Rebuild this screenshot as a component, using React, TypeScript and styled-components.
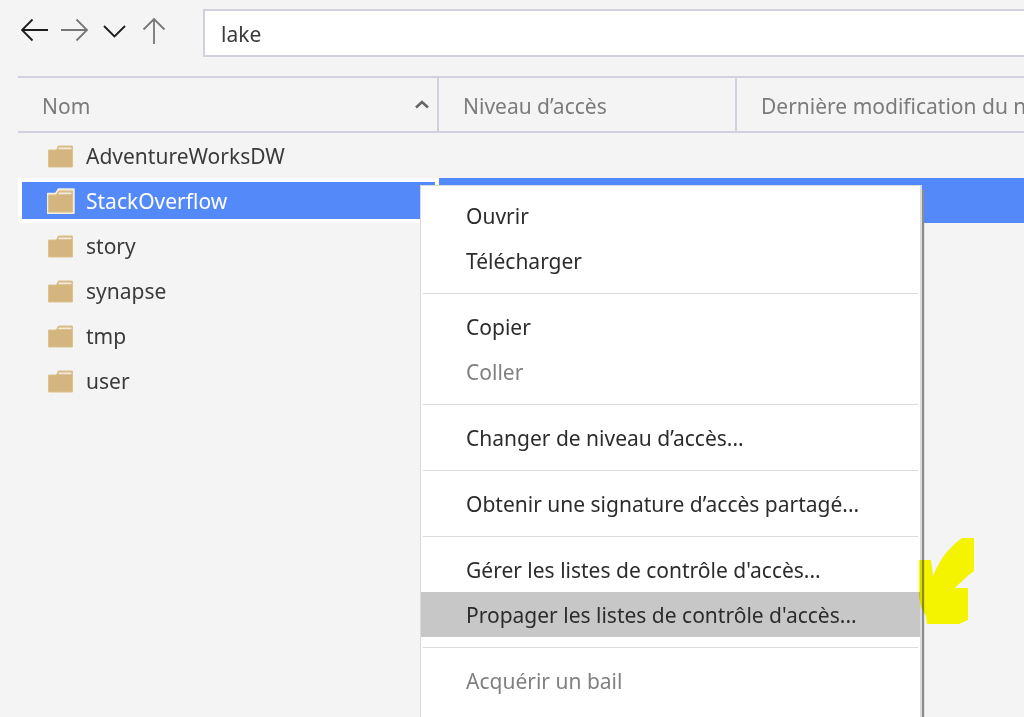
import React from "react";
import styled, { createGlobalStyle } from "styled-components";

const GlobalStyle = createGlobalStyle`
  *, *::before, *::after { box-sizing: border-box; }
  body {
    margin: 0;
    background: #f4f4f4;
    color: #3a3a3a;
    font: 21px/30px "Noto Sans", "Open Sans", sans-serif;
  }
  button, input { font: inherit; color: inherit; }
`;

const Page = styled.main`
  position: relative;
  min-height: 100vh;
  max-height: 100vh;
  overflow: hidden;
  padding: 9px 0 0 18px;
`;

const Toolbar = styled.div`
  display: flex;
  align-items: flex-start;
  margin-bottom: 19px;
`;

const NavButtons = styled.div`
  display: flex;
  flex: none;
  width: 185px;
  padding-top: 6px;
`;

const NavButton = styled.button`
  display: flex;
  align-items: center;
  justify-content: center;
  width: 40px;
  height: 32px;
  margin: 0;
  padding: 0;
  border: 0;
  background: none;
  color: ${(p) => (p.disabled ? "#777" : "#1c1c1c")};
  &:first-child { width: 36px; }
`;

const PathInput = styled.input`
  flex: 1;
  min-width: 0;
  height: 48px;
  padding: 2px 16px 0;
  border: 2px solid #d0d0de;
  border-right: 0;
  border-radius: 0;
  background: #fff;
  outline: none;
`;

const FileTable = styled.table`
  width: 100%;
  table-layout: fixed;
  border-collapse: separate;
  border-spacing: 0;
`;

const HeadCell = styled.th<{ $width?: number }>`
  width: ${(p) => (p.$width ? `${p.$width}px` : "auto")};
  height: 57px;
  padding: 2px 0 0 24px;
  border: solid #d0d0de;
  border-width: 2px ${(p) => (p.$width ? "2px" : "0")} 2px 0;
  color: #7b7b7b;
  font-weight: 400;
  text-align: left;
  white-space: nowrap;
  overflow: hidden;
`;

const SortLabel = styled.span`
  display: flex;
  align-items: center;
  justify-content: space-between;
  margin-right: 6px;
`;

const Row = styled.tr<{ $selected?: boolean }>`
  background: ${(p) => (p.$selected ? "#5389f8" : "transparent")};
  color: ${(p) => (p.$selected ? "#fff" : "inherit")};
`;

const Cell = styled.td<{ $selected?: boolean }>`
  height: 45px;
  padding: 0 0 0 29px;
  box-shadow: ${(p) => (p.$selected ? "inset 0 0 0 4px #fff" : "none")};
`;

const FileName = styled.span`
  display: flex;
  align-items: center;
  gap: 10px;
`;

const Menu = styled.div`
  position: absolute;
  top: 185px;
  left: 420px;
  width: 502px;
  padding: 7px 0 40px;
  border: 1px solid #d9d9e0;
  border-right-width: 2px;
  background: #fff;
  box-shadow: 2px 5px 1px #8c8c8c;
`;

const MenuItem = styled.button<{ $active?: boolean }>`
  display: block;
  width: 100%;
  height: 45px;
  margin: 0;
  padding: 1px 0 0 45px;
  border: 0;
  background: ${(p) => (p.$active ? "#c7c7c7" : "transparent")};
  color: ${(p) => (p.disabled ? "#808080" : "#2c2c2c")};
  text-align: left;
  white-space: nowrap;
`;

const Separator = styled.hr`
  height: 1px;
  margin: 10px 2px;
  border: 0;
  background: #dcdcdf;
`;

const Highlighter = styled.svg`
  position: absolute;
  top: 538px;
  left: 919px;
  mix-blend-mode: multiply;
`;

type NavKind = "back" | "forward" | "recent" | "up";

const navPaths: Record<NavKind, string> = {
  back: "M27 14H1M11.500 3.500L1 14l10.500 10.500",
  forward: "M2 14h26M17.500 3.500L28 14 17.500 24.500",
  recent: "M5 10l10.500 10.500L26 10",
  up: "M15 28V3M4.500 13.500L15 3l10.500 10.500",
};

const NavIcon = ({ kind }: { kind: NavKind }) => (
  <svg width="30" height="30" viewBox="0 0 30 30" fill="none" stroke="currentColor" strokeWidth="1.8" aria-hidden="true">
    <path d={navPaths[kind]} />
  </svg>
);

const FolderIcon = ({ selected }: { selected?: boolean }) => (
  <svg width="29" height="26" viewBox="0 0 29 26" aria-hidden="true">
    {selected && (
      <path d="M0.500 5.500h8L11.500 1H27v24.200H0.500z" fill="#f5e9cf" stroke="#f5eddc" strokeWidth="1.500" strokeLinejoin="round" />
    )}
    <path d="M1.500 7h7.800L11.500 3h14v21h-24z" fill="#d4b57e" stroke="#dcc290" strokeWidth="1" />
    <path d="M11 6.200l1-1.700h12.500v1.700z" fill="#f2ebdc" />
  </svg>
);

const folders = ["AdventureWorksDW", "StackOverflow", "story", "synapse", "tmp", "user"];
const selectedFolder = "StackOverflow";

type Entry = { label: string; disabled?: boolean; active?: boolean };

const menuGroups: Entry[][] = [
  [{ label: "Ouvrir" }, { label: "Télécharger" }],
  [{ label: "Copier" }, { label: "Coller", disabled: true }],
  [{ label: "Changer de niveau d’accès..." }],
  [{ label: "Obtenir une signature d’accès partagé..." }],
  [
    { label: "Gérer les listes de contrôle d'accès..." },
    { label: "Propager les listes de contrôle d'accès...", active: true },
  ],
  [{ label: "Acquérir un bail", disabled: true }],
];

export default function App() {
  return (
    <>
      <GlobalStyle />
      <Page>
        <Toolbar>
          <NavButtons>
            <NavButton aria-label="Précédent"><NavIcon kind="back" /></NavButton>
            <NavButton aria-label="Suivant" disabled><NavIcon kind="forward" /></NavButton>
            <NavButton aria-label="Historique"><NavIcon kind="recent" /></NavButton>
            <NavButton aria-label="Dossier parent" disabled><NavIcon kind="up" /></NavButton>
          </NavButtons>
          <PathInput aria-label="Chemin" defaultValue="lake" />
        </Toolbar>

        <FileTable>
          <thead>
            <tr>
              <HeadCell $width={421} aria-sort="ascending">
                <SortLabel>
                  Nom
                  <svg width="18" height="16" viewBox="0 0 18 16" fill="none" stroke="#666" strokeWidth="2.600" aria-hidden="true">
                    <path d="M3 9.500L9 4l6 5.500" />
                  </svg>
                </SortLabel>
              </HeadCell>
              <HeadCell $width={298}>Niveau d’accès</HeadCell>
              <HeadCell>Dernière modification du niveau d’accès</HeadCell>
            </tr>
          </thead>
          <tbody>
            {folders.map((name) => {
              const selected = name === selectedFolder;
              return (
                <Row key={name} $selected={selected}>
                  <Cell $selected={selected}>
                    <FileName><FolderIcon selected={selected} />{name}</FileName>
                  </Cell>
                  <td />
                  <td />
                </Row>
              );
            })}
          </tbody>
        </FileTable>

        <Menu role="menu">
          {menuGroups.map((group, index) => (
            <React.Fragment key={group[0].label}>
              {index > 0 && <Separator />}
              {group.map((item) => (
                <MenuItem key={item.label} role="menuitem" disabled={item.disabled} $active={item.active}>
                  {item.label}
                </MenuItem>
              ))}
            </React.Fragment>
          ))}
        </Menu>

        <Highlighter width="56" height="86" viewBox="0 0 56 86" aria-hidden="true">
          <path
            d="M0 22h12l2 16c3-7 5-11 8-16C27 14 35 6 43 0h12v33c-7 5-14 12-20 18l2-1h12v32l-9 4H8l-1-8-5-9-2-10z"
            fill="#ffff00"
          />
        </Highlighter>
      </Page>
    </>
  );
}
